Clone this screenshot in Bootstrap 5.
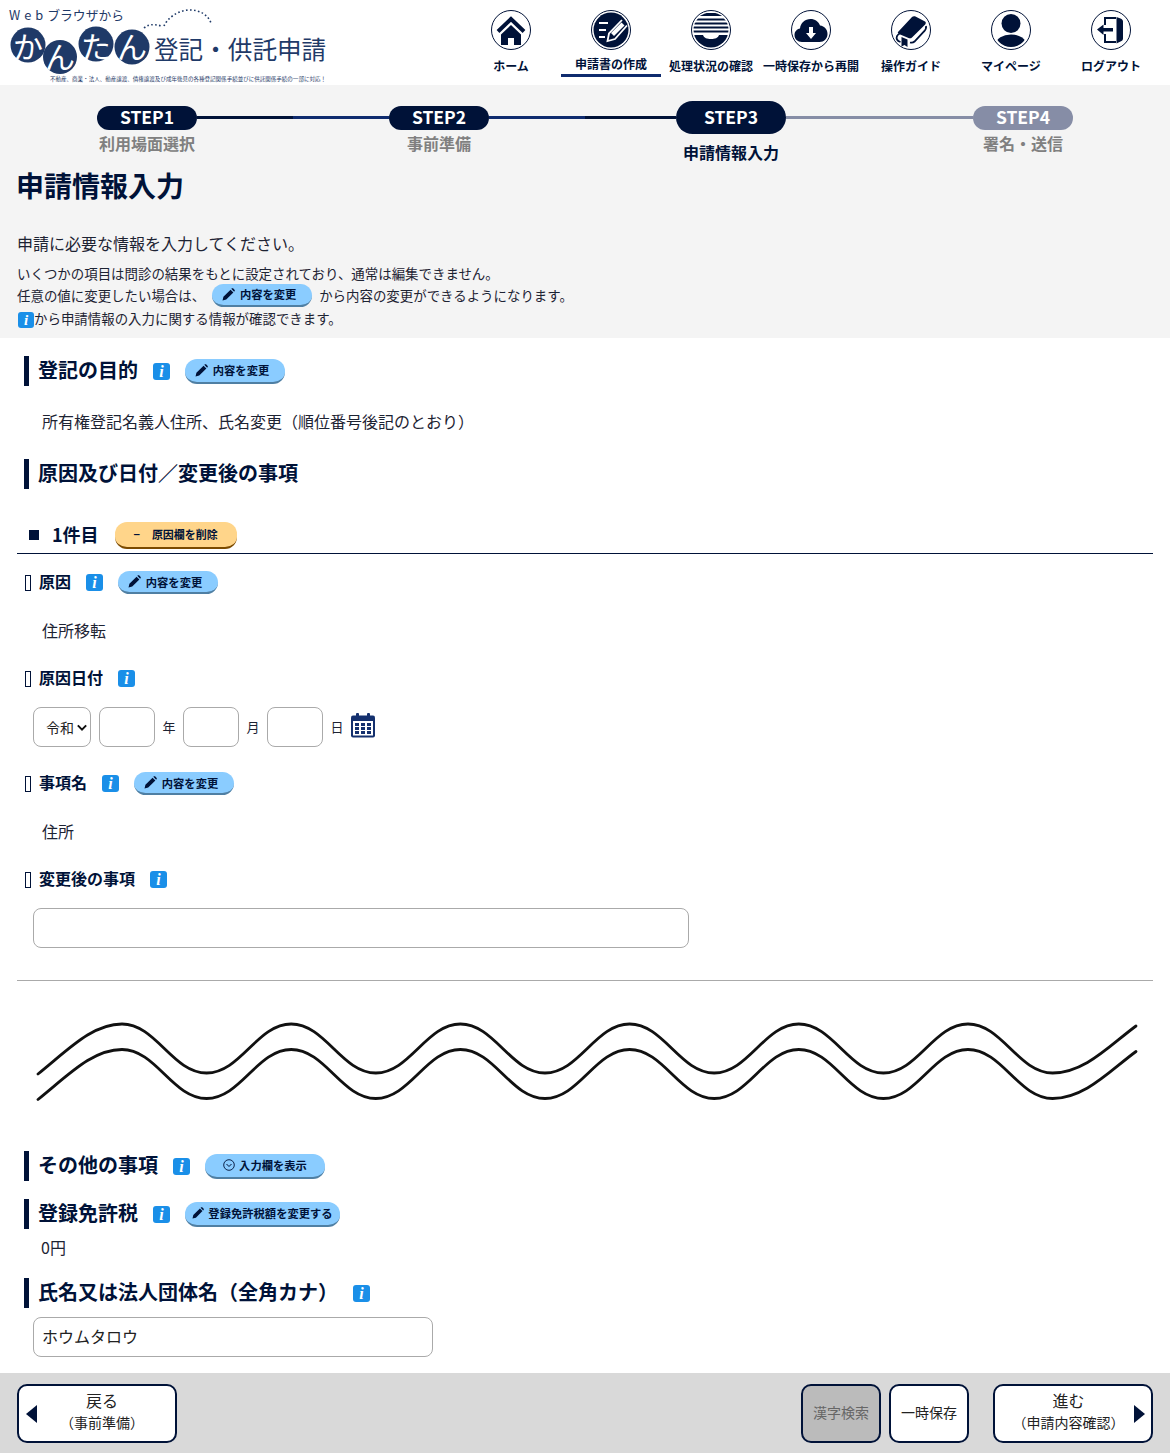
<!DOCTYPE html>
<html lang="ja">
<head>
<meta charset="utf-8">
<title>申請情報入力</title>
<link href="https://cdn.jsdelivr.net/npm/bootstrap@5.3.0/dist/css/bootstrap.min.css" rel="stylesheet">
<style>
body{font-family:"Noto Sans CJK JP","Noto Sans",sans-serif;color:#1d2333;font-size:16px;line-height:24px;background:#fff}
.hdr{height:85px;padding-right:9px}
.logo-svg{display:block;width:340px;height:85px}
.logo-svg text{font-family:"Noto Sans CJK JP",sans-serif;fill:#1f3a68}
.nav-it{width:100px;padding:10px 0 0!important;color:#001238;font-size:12px;line-height:16px;font-weight:700;text-align:center;text-decoration:none}
.nav-it svg{display:block;margin:0 auto;width:40px;height:40px}
.nav-lb{display:block;margin-top:8px;white-space:nowrap}
.nav-it.cur .nav-lb{margin-top:6px;padding-bottom:2px;border-bottom:3px solid #0f2b6e}
.band{background:#f4f4f4;height:253px;padding:16px 0 8px 1px}
.stp{width:292px;height:62px;text-align:center;color:#808080;font-weight:700;font-size:16px;line-height:18px}
.stp-top{height:33px}
.stp-lb{height:20px}
.seg{flex:1 1 0;height:3px}
.sg-d{background:#001238}.sg-b{background:#0f2b6e}.sg-g{background:#868da6}
.pill{width:100px;height:24px;border-radius:12px;background:#001238;color:#fff;line-height:22px;font-size:17.5px}
.pill.now{width:110px;height:33px;border-radius:17px;line-height:32px}
.pill.off{background:#868da6}
.stp.now-s{color:#001238}
.stp.now-s .stp-lb{margin-top:9px}
.ttl{margin:4px 0 0 15px;font-size:28px;line-height:36px;font-weight:700;color:#001238}
.lead-p{margin:28px 0 7px 16px;line-height:24px;font-size:16px}
.small-l{margin:0 0 0 16px;font-size:13.45px;line-height:22.5px;white-space:nowrap}
.small-up{margin-top:-1px}
.small-l .fbtn{margin:0 7px 0 7px;vertical-align:top}
.small-l .info{width:16px;height:16px;font-size:15px;line-height:16px;vertical-align:-1px;margin-left:1px}
.body-w{padding:0 17px}
.sec-h{height:30px;margin-left:7px;padding-left:9px;border-left:5px solid #001238;gap:15px}
.sec-h h2{margin:0;padding-bottom:2px;font-size:20px;line-height:28px;font-weight:700;color:#001238;white-space:nowrap}
.sec-h .fbtn{height:25px}
.info{display:inline-block;width:17px;height:17px;border-radius:3px;background:#1a8fe8;color:#fff;font:italic 700 16px/17px "Liberation Serif",serif;text-align:center;vertical-align:-3px;flex:none}
.fbtn{display:inline-flex;align-items:center;justify-content:center;gap:5px;width:100px;height:23px;padding:0 6px 0 0;border:0;border-bottom:2px solid #4f7fa3;border-radius:12px;background:#8accff;color:#001238;font-size:11.3px;line-height:16px;font-weight:700;white-space:nowrap}
.fbtn:hover{background:#8accff;color:#001238}
.fbtn svg{flex:none}
.del-b{width:122px;height:27px;background:#ffd58a;border-bottom-color:#7a4a00;font-size:11px;gap:12px;margin-left:3px;padding:0}
.del-b:hover{background:#ffd58a}
.val{margin:0;padding:0 0 2px 25px;line-height:22px}
.ken{height:36px;margin-top:29px;padding-bottom:1px;border-bottom:1px solid #001238;color:#001238;font-weight:700;font-size:18px}
.ken i{display:block;width:10px;height:10px;background:#001238;margin:0 13px 0 12px}
.ken-t{padding-bottom:2px;line-height:22px}
.sub-h{height:25px;margin-left:8px;gap:15px;color:#001238;font-weight:700;font-size:16px;line-height:23px;white-space:nowrap}
.sub-h>span:nth-child(2){padding-bottom:2px}
.tofu{display:block;width:6px;height:16px;border:1px solid #001238;margin-right:-7px;flex:none}
.fld{margin-left:16px}
.form-control.inp,.form-select.inp{height:40px;border:1px solid #aaa;border-radius:8px;font-size:16px;color:#222;padding:0 8px 2px;box-shadow:none}
.form-select.inp{width:58px;padding:0 0 0 12px;font-size:14px;background-image:url("data:image/svg+xml,%3csvg xmlns='http://www.w3.org/2000/svg' viewBox='0 0 12 8'%3e%3cpath fill='none' stroke='%23111' stroke-width='2.4' d='M1 1.500l5 5 5-5'/%3e%3c/svg%3e");background-position:right 3px center;background-size:10px 7px;color:#222}
.d-inp{width:56px;margin-left:8px}
.d-unit{width:28px;font-size:13px;text-align:center;flex:none}
.cal{margin-bottom:3px}
.hr-l{margin:32px 0 0;border:0;border-top:1px solid #aaa;opacity:1}
.wave{display:block;width:1136px;height:100px;margin-top:34px}
.foot{height:80px;background:#d9d9d9;padding:11px 17px 10px}
.ft-b{display:flex;align-items:center;height:59px;padding:0;background:#fff;border:2px solid #001238;border-radius:10px;color:#222;font-size:14px;line-height:22px;text-align:center}
.ft-b:hover{background:#fff;color:#222}
.ft-w{width:160px}
.ft-s{width:80px;justify-content:center;padding-bottom:4px}
.ft-off{background:#bbb;color:#666}
.ft-off:hover{background:#bbb;color:#666}
.ft-t{flex:1 1 0;min-width:0;padding-bottom:5px}
.ft-back{padding-right:8px}
.ft-next{padding-left:8px}
.ft-t b{display:block;font-weight:400;font-size:16px}
.tri-l{width:0;height:0;border:solid transparent;border-width:9px 11px 9px 0;border-right-color:#001238;margin-left:7px}
.tri-r{width:0;height:0;border:solid transparent;border-width:9px 0 9px 11px;border-left-color:#001238;margin-right:6px}
</style>
</head>
<body>
<svg width="0" height="0" class="d-block position-absolute">
<defs>
<symbol id="pen" viewBox="0 0 12 12"><path d="M0.5 11.5l.8-3.4L7.9 1.5l2.6 2.6-6.6 6.6zM8.6.8l.6-.5c.3-.2.7-.2 1 0l1.5 1.5c.2.3.2.7 0 1l-.5.6z" fill="#001238"/></symbol>
</defs>
</svg>

<header class="hdr d-flex justify-content-between bg-white">
<svg class="logo-svg" viewBox="0 0 340 85" role="img">
<text x="9" y="19.500" font-size="12.800"><tspan letter-spacing="4">Web</tspan>ブラウザから</text>
<path d="M144 28c5-4 9-4 18-2M164 26c3-7 13-16 26-16 10 0 18 5 21 13" fill="none" stroke="#1f3a68" stroke-width="1.600" stroke-dasharray="1.600 2.400"/>
<g fill="#1f3a68"><circle cx="28" cy="45" r="17.500"/><circle cx="60" cy="57" r="17"/><circle cx="96" cy="44" r="17.500"/><circle cx="132" cy="47" r="17.500"/></g>
<g font-size="30" font-weight="400"><text x="13" y="57.500" style="fill:#fff">か</text><text x="45" y="68" style="fill:#fff">ん</text><text x="81" y="57.500" style="fill:#fff">た</text><text x="117" y="58" style="fill:#fff">ん</text></g>
<text x="154" y="59" font-size="24.600">登記・供託申請</text>
<text x="50" y="80.500" font-size="5.400" textLength="276" lengthAdjust="spacingAndGlyphs">不動産、商業・法人、動産譲渡、債権譲渡及び成年後見の各種登記関係手続並びに供託関係手続の一部に対応！</text>
</svg>
<nav class="nav flex-nowrap align-items-start">
<a class="nav-it nav-link" href="#"><svg viewBox="0 0 40 40"><circle cx="20" cy="20" r="19.500" fill="#fff" stroke="#001238"/><path d="M7 21.500L20 9l13 12.500" fill="none" stroke="#001238" stroke-width="4"/><path d="M10 24.500L20 15l10 9.500V35h-7v-7h-6v7h-7z" fill="#001238"/></svg><span class="nav-lb">ホーム</span></a>
<a class="nav-it nav-link cur" href="#"><svg viewBox="0 0 40 40"><circle cx="20" cy="20" r="19.500" fill="#fff" stroke="#001238"/><circle cx="20" cy="20" r="17.500" fill="#001238"/><path d="M8 13h9M8 20h7M8 27h6" stroke="#fff" stroke-width="2"/><path d="M31 10L18 23.500l-1.500 7.500 7.500-2L36 15.500" fill="none" stroke="#fff" stroke-width="1.800"/><path d="M30.500 12.500l3 3L23 26l-3-3z" fill="#fff"/></svg><span class="nav-lb">申請書の作成</span></a>
<a class="nav-it nav-link" href="#"><svg viewBox="0 0 40 40"><defs><clipPath id="ccl"><circle cx="20" cy="20" r="17.500"/></clipPath></defs><circle cx="20" cy="20" r="19.500" fill="#fff" stroke="#001238"/><g clip-path="url(#ccl)"><path d="M0 3h40v3H0zM0 8.500h40v2H0zM0 12.500h40v2H0zM0 16.500h40v2H0zM0 20.500h40v2H0z" fill="#001238"/><path d="M0 25h12c1 3 4 4 8 4s7-1 8-4h12v15H0z" fill="#001238"/></g></svg><span class="nav-lb">処理状況の確認</span></a>
<a class="nav-it nav-link" href="#"><svg viewBox="0 0 40 40"><circle cx="20" cy="20" r="19.500" fill="#fff" stroke="#001238"/><path d="M11 32c-4.500 0-7.500-3-7.500-7 0-3.500 2.500-6 5.500-6.500C9.500 13 14 9 19.500 9c4.500 0 8 2.500 9.500 6.500 4.500.5 7.500 4 7.500 8.500 0 4.500-3.500 8-8 8z" fill="#001238"/><path d="M18 17h4v6h3l-5 6-5-6h3z" fill="#fff"/></svg><span class="nav-lb">一時保存から再開</span></a>
<a class="nav-it nav-link" href="#"><svg viewBox="0 0 40 40"><circle cx="20" cy="20" r="19.500" fill="#fff" stroke="#001238"/><path d="M7 22L21 7c1-1 2.500-1 3.500-.5L34 11.500c1 .6 1 2 .2 3L21 27.500c-1 1-2.500 1-3.500.5L8 24c-1-.5-1.500-1.200-1-2z" fill="#001238"/><path d="M9 23.500c-3 1-4 4-3 6 .6 1.200 2 2 3.500 2.500M19 32.500c2 .5 3.500 0 4.500-1L33 21.500c1.500-1.500 2.500-3 2-5.500" fill="none" stroke="#001238" stroke-width="1.800"/><path d="M10.500 27l6 2.500V37l-3-2-3 1.500z" fill="#001238"/></svg><span class="nav-lb">操作ガイド</span></a>
<a class="nav-it nav-link" href="#"><svg viewBox="0 0 40 40"><defs><clipPath id="cbd"><circle cx="20" cy="20" r="17"/></clipPath></defs><circle cx="20" cy="20" r="19.500" fill="#fff" stroke="#001238"/><circle cx="20" cy="13.500" r="9.500" fill="#001238"/><ellipse cx="20" cy="34" rx="15" ry="9.500" fill="#001238" clip-path="url(#cbd)"/></svg><span class="nav-lb">マイページ</span></a>
<a class="nav-it nav-link" href="#"><svg viewBox="0 0 40 40"><circle cx="20" cy="20" r="19.500" fill="#fff" stroke="#001238"/><path d="M25 8H14v7M14 24v8h11" fill="none" stroke="#001238" stroke-width="2"/><path d="M25.500 7l4 1.500c1.500.5 2.500 1.500 2.500 3v17c0 1.500-1 2.500-2.500 3l-4 2z" fill="#001238"/><path d="M6 19.500l6.500-5v3.500H22v3.500h-9.500v3.500z" fill="#001238"/></svg><span class="nav-lb">ログアウト</span></a>
</nav>
</header>

<section class="band">
<div class="d-flex">
<div class="stp"><div class="stp-top d-flex align-items-center"><span class="seg"></span><span class="pill">STEP1</span><span class="seg sg-d"></span></div><div class="stp-lb">利用場面選択</div></div>
<div class="stp"><div class="stp-top d-flex align-items-center"><span class="seg sg-b"></span><span class="pill">STEP2</span><span class="seg sg-b"></span></div><div class="stp-lb">事前準備</div></div>
<div class="stp now-s"><div class="stp-top d-flex align-items-center"><span class="seg sg-d"></span><span class="pill now">STEP3</span><span class="seg sg-g"></span></div><div class="stp-lb">申請情報入力</div></div>
<div class="stp"><div class="stp-top d-flex align-items-center"><span class="seg sg-g"></span><span class="pill off">STEP4</span><span class="seg"></span></div><div class="stp-lb">署名・送信</div></div>
</div>
<h1 class="ttl">申請情報入力</h1>
<p class="lead-p">申請に必要な情報を入力してください。</p>
<p class="small-l">いくつかの項目は問診の結果をもとに設定されており、通常は編集できません。</p>
<p class="small-l small-up">任意の値に変更したい場合は、<button class="btn fbtn" type="button"><svg width="13" height="13"><use href="#pen"/></svg>内容を変更</button>から内容の変更ができるようになります。</p>
<p class="small-l"><span class="info">i</span>から申請情報の入力に関する情報が確認できます。</p>
</section>

<main class="body-w">
<div class="sec-h d-flex align-items-center" style="margin-top:18px"><h2>登記の目的</h2><span class="info">i</span><button class="btn fbtn" type="button"><svg width="13" height="13"><use href="#pen"/></svg>内容を変更</button></div>
<p class="val" style="margin-top:24px">所有権登記名義人住所、氏名変更（順位番号後記のとおり）</p>
<div class="sec-h d-flex align-items-center" style="margin-top:25px"><h2>原因及び日付／変更後の事項</h2></div>

<div class="ken d-flex align-items-center"><i></i><span class="ken-t">1件目</span><button class="btn fbtn del-b ms-3" type="button"><span>−</span><span>原因欄を削除</span></button></div>

<div class="sub-h d-flex align-items-center" style="margin-top:16px"><span class="tofu"></span><span>原因</span><span class="info">i</span><button class="btn fbtn" type="button"><svg width="13" height="13"><use href="#pen"/></svg>内容を変更</button></div>
<p class="val" style="margin-top:24px">住所移転</p>
<div class="sub-h d-flex align-items-center" style="margin-top:23px"><span class="tofu"></span><span>原因日付</span><span class="info">i</span></div>
<div class="fld d-flex align-items-center" style="margin-top:16px">
<select class="form-select inp"><option>令和</option></select>
<input class="form-control inp d-inp" type="text"><span class="d-unit">年</span>
<input class="form-control inp d-inp ms-0" type="text"><span class="d-unit">月</span>
<input class="form-control inp d-inp ms-0" type="text"><span class="d-unit">日</span>
<svg width="24" height="25" viewBox="0 0 24 25" class="cal"><rect x="0" y="2.500" width="24" height="22" rx="2" fill="#14306e"/><rect x="5" y="0" width="3" height="5" rx="1" fill="#14306e"/><rect x="16" y="0" width="3" height="5" rx="1" fill="#14306e"/><rect x="2" y="8" width="20" height="14.500" fill="#fff"/><g fill="#14306e"><rect x="4" y="10" width="4" height="3"/><rect x="10" y="10" width="4" height="3"/><rect x="16" y="10" width="4" height="3"/><rect x="4" y="14" width="4" height="3"/><rect x="10" y="14" width="4" height="3"/><rect x="16" y="14" width="4" height="3"/><rect x="4" y="18" width="4" height="3"/><rect x="10" y="18" width="4" height="3"/><rect x="16" y="18" width="4" height="3"/></g></svg>
</div>
<div class="sub-h d-flex align-items-center" style="margin-top:24px"><span class="tofu"></span><span>事項名</span><span class="info">i</span><button class="btn fbtn" type="button"><svg width="13" height="13"><use href="#pen"/></svg>内容を変更</button></div>
<p class="val" style="margin-top:24px">住所</p>
<div class="sub-h d-flex align-items-center" style="margin-top:23px"><span class="tofu"></span><span>変更後の事項</span><span class="info">i</span></div>
<div class="fld" style="margin-top:16px"><input class="form-control inp" style="width:656px" type="text"></div>
<hr class="hr-l">
<svg class="wave" viewBox="17 1015 1136 100"><g fill="none" stroke="#111" stroke-width="2.800" stroke-linecap="round"><path id="wv" d="M38 1074C68 1050 92 1024 122 1024c34 0 50.600 49 84.600 49c34 0 50.600-49 84.600-49c34 0 50.600 49 84.600 49c34 0 50.600-49 84.600-49c34 0 50.600 49 84.600 49c34 0 50.600-49 84.600-49c34 0 50.600 49 84.600 49c34 0 50.600-49 84.600-49c34 0 50.600 49 84.600 49c34 0 50.600-49 84.600-49c34 0 50.600 49 84.600 49C1085 1073 1110 1045 1136 1026"/><use href="#wv" y="25.500"/></g></svg>

<div class="sec-h d-flex align-items-center" style="margin-top:36px"><h2>その他の事項</h2><span class="info">i</span><button class="btn fbtn p-0" style="width:120px;gap:4px" type="button"><svg width="12" height="12" viewBox="0 0 12 12"><circle cx="6" cy="6" r="5.300" fill="none" stroke="#001238" stroke-width=".9"/><path d="M3.500 5l2.500 2.500L8.500 5" fill="none" stroke="#001238" stroke-width="1"/></svg>入力欄を表示</button></div>
<div class="sec-h d-flex align-items-center" style="margin-top:18px"><h2>登録免許税</h2><span class="info">i</span><button class="btn fbtn p-0" style="width:155px;gap:4px" type="button"><svg width="12" height="12"><use href="#pen"/></svg>登録免許税額を変更する</button></div>
<p class="val" style="margin:7px 0 0;padding-left:24px">0円</p>
<div class="sec-h d-flex align-items-center" style="margin-top:18px"><h2>氏名又は法人団体名（全角カナ）</h2><span class="info">i</span></div>
<div class="fld" style="margin-top:9px;margin-bottom:16px"><input class="form-control inp" style="width:400px" type="text" value="ホウムタロウ"></div>
</main>

<footer class="foot d-flex">
<button class="btn ft-b ft-w" type="button"><span class="tri-l"></span><span class="ft-t ft-back"><b>戻る</b>（事前準備）</span></button>
<button class="btn ft-b ft-s ft-off ms-auto" type="button">漢字検索</button>
<button class="btn ft-b ft-s ms-2" type="button">一時保存</button>
<button class="btn ft-b ft-w" style="margin-left:24px" type="button"><span class="ft-t ft-next"><b>進む</b>（申請内容確認）</span><span class="tri-r"></span></button>
</footer>
</body>
</html>
